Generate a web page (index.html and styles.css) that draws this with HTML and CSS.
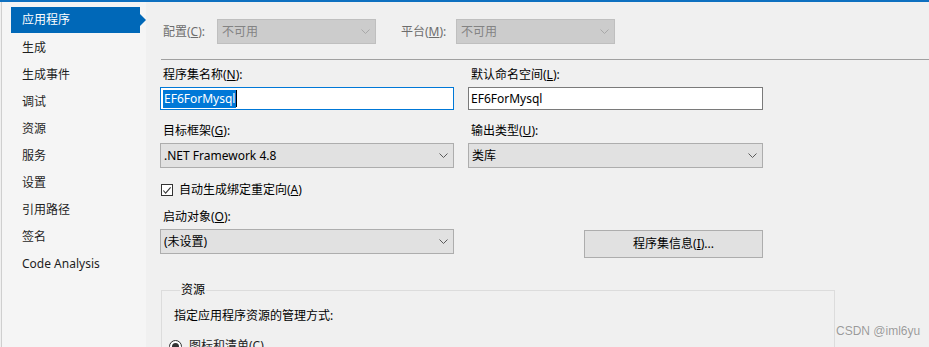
FILE: index.html
```html
<!DOCTYPE html>
<html lang="zh-CN">
<head>
<meta charset="utf-8">
<link rel="stylesheet" href="styles.css">
</head>
<body>
<div class="topbar"></div>
<div class="wrap">
  <nav class="side">
    <div class="item active">应用程序</div>
    <div class="item">生成</div>
    <div class="item">生成事件</div>
    <div class="item">调试</div>
    <div class="item">资源</div>
    <div class="item">服务</div>
    <div class="item">设置</div>
    <div class="item">引用路径</div>
    <div class="item">签名</div>
    <div class="item">Code Analysis</div>
  </nav>
  <main class="main">
    <div class="cfg">
      <span class="dlabel">配置(<u>C</u>):</span>
      <div class="combo dis"><span>不可用</span><svg class="chev" width="9" height="5" viewBox="0 0 9 5"><polyline points="0.5,0.5 4.5,4.5 8.5,0.5" fill="none" stroke="#a8a8a8" stroke-width="1"/></svg></div>
      <span class="dlabel plat">平台(<u>M</u>):</span>
      <div class="combo dis"><span>不可用</span><svg class="chev" width="9" height="5" viewBox="0 0 9 5"><polyline points="0.5,0.5 4.5,4.5 8.5,0.5" fill="none" stroke="#a8a8a8" stroke-width="1"/></svg></div>
    </div>
    <div class="sep"></div>
    <div class="grid">
      <div class="field">
        <div class="lbl">程序集名称(<u>N</u>):</div>
        <div class="input focus"><span class="sel">EF6ForMysql</span><span class="caret"></span></div>
      </div>
      <div class="field">
        <div class="lbl">默认命名空间(<u>L</u>):</div>
        <div class="input">EF6ForMysql</div>
      </div>
      <div class="field">
        <div class="lbl">目标框架(<u>G</u>):</div>
        <div class="select"><span>.NET Framework 4.8</span><svg class="chev" width="9" height="5" viewBox="0 0 9 5"><polyline points="0.5,0.5 4.5,4.5 8.5,0.5" fill="none" stroke="#5a5a5a" stroke-width="1"/></svg></div>
      </div>
      <div class="field">
        <div class="lbl">输出类型(<u>U</u>):</div>
        <div class="select"><span>类库</span><svg class="chev" width="9" height="5" viewBox="0 0 9 5"><polyline points="0.5,0.5 4.5,4.5 8.5,0.5" fill="none" stroke="#5a5a5a" stroke-width="1"/></svg></div>
      </div>
      <label class="check">
        <span class="box"><svg width="11" height="11" viewBox="0 0 11 11"><polyline points="1.5,5.5 4,8.5 9.5,2" fill="none" stroke="#333" stroke-width="1.2"/></svg></span>
        <span>自动生成绑定重定向(<u>A</u>)</span>
      </label>
      <div class="field">
        <div class="lbl">启动对象(<u>O</u>):</div>
        <div class="select"><span>(未设置)</span><svg class="chev" width="9" height="5" viewBox="0 0 9 5"><polyline points="0.5,0.5 4.5,4.5 8.5,0.5" fill="none" stroke="#5a5a5a" stroke-width="1"/></svg></div>
      </div>
      <div class="btncell">
        <button class="btn">程序集信息(<u>I</u>)...</button>
      </div>
    </div>
    <fieldset class="group">
      <legend>资源</legend>
      <p class="desc">指定应用程序资源的管理方式:</p>
      <label class="radio"><span class="dot"></span><span>图标和清单(<u>C</u>)</span></label>
    </fieldset>
  </main>
</div>
<div class="watermark">CSDN @iml6yu</div>
</body>
</html>
```
FILE: styles.css
```css
* { box-sizing: border-box; }
html, body { margin: 0; height: 100%; overflow: hidden; }
body {
  background: #f0f0f0;
  font-family: "Noto Sans", "Noto Sans CJK SC", sans-serif;
  font-size: 12px;
  line-height: 16px;
  color: #1e1e1e;
  position: relative;
}
u { text-decoration: underline; text-underline-offset: 1px; }
.topbar { height: 2px; background: #0e70c0; }
.wrap { display: flex; height: 345px; padding-left: 1px; }
.side {
  width: 145px;
  flex: none;
  background: #f5f5f5;
  border-left: 1px solid #cfcfcf;
  padding-top: 5px;
}
.item {
  height: 27px;
  line-height: 27px;
  margin-left: 9px;
  width: 129px;
  padding-left: 11px;
  font-size: 12px;
  position: relative;
}
.item.active { background: #0068b8; color: #fff; height: 26px; line-height: 26px; margin-bottom: 1px; }
.item.active::after {
  content: "";
  position: absolute;
  right: -6px;
  top: 7px;
  border-left: 6px solid #0068b8;
  border-top: 6px solid transparent;
  border-bottom: 6px solid transparent;
}
.main { flex: 1; padding-left: 14px; padding-top: 17px; }
.cfg { display: flex; align-items: center; height: 25px; }
.dlabel { color: #6d6d6d; padding-left: 3px; width: 57px; }
.dlabel.plat { margin-left: 22px; width: 58px; }
.combo, .select {
  display: flex;
  align-items: center;
  justify-content: space-between;
  height: 25px;
  padding: 0 5px 0 3px;
}
.combo { width: 159px; background: #cccccc; border: 1px solid #bfbfbf; color: #838383; padding-left: 4px; }
.sep { height: 1px; background: #a0a0a0; margin: 15px 0 0 1px; }
.grid {
  display: grid;
  grid-template-columns: 294px 295px;
  column-gap: 14px;
  margin-top: 7px;
}
.field { display: flex; flex-direction: column; gap: 4px; margin-bottom: 13px; }
.lbl { padding-left: 3px; color: #000; }
.input {
  height: 23px;
  background: #fff;
  border: 1px solid #7a7a7a;
  display: flex;
  align-items: center;
  padding-left: 2px;
  color: #000;
}
.input.focus { border-color: #0078d7; margin-right: 0; }
.sel { background: #0078d7; color: #fff; line-height: 18px; padding: 0 1px; }
.caret { width: 1px; height: 17px; background: #000; }
.select { background: #e1e1e1; border: 1px solid #adadad; color: #000; }
.check {
  grid-column: 1 / 3;
  display: flex;
  align-items: center;
  gap: 6px;
  height: 16px;
  margin: 1px 0 11px 1px;
  color: #000;
}
.box {
  width: 12px; height: 12px;
  border: 1px solid #333;
  background: #fff;
  display: flex; align-items: center; justify-content: center;
}
.box svg { display: block; }
.btncell { padding-top: 21px; }
.btn {
  margin-left: 116px;
  width: 179px;
  height: 28px;
  background: #e1e1e1;
  border: 1px solid #adadad;
  font: inherit;
  color: #000;
  padding: 0;
}
.group {
  margin: 15px 0 0 1px;
  width: 674px;
  border: 1px solid #dcdcdc;
  border-bottom: none;
  padding: 0 0 0 12px;
  min-height: 80px;
}
.group legend { padding: 0 1px; margin-left: 6px; color: #000; }
.desc { margin: 10px 0 0 0; color: #000; }
.radio { display: flex; align-items: center; gap: 7px; margin-top: 14px; margin-left: -5px; }
.dot {
  width: 13px; height: 13px; border-radius: 50%;
  border: 1px solid #333; background: #fff;
  position: relative;
}
.dot::after {
  content: ""; position: absolute; left: 2px; top: 2px;
  width: 7px; height: 7px; border-radius: 50%; background: #333;
}
.watermark {
  position: absolute;
  left: 836px;
  top: 323px;
  font-family: "Liberation Sans", Arial, sans-serif;
  font-size: 12px;
  color: #9a9a9a;
  text-shadow: 0 0 1px #fff;
}
```
